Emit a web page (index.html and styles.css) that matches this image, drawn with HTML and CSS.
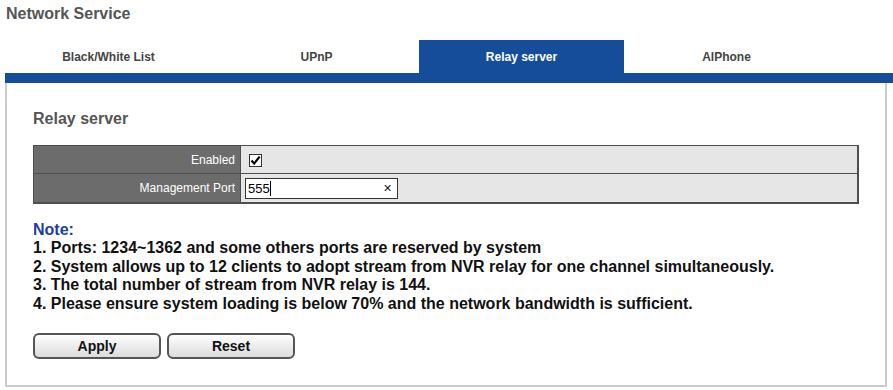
FILE: index.html
```html
<!DOCTYPE html>
<html lang="en">
<head>
    <meta charset="UTF-8">
    <title>Network Service</title>
    <link rel="stylesheet" href="styles.css">
</head>
<body>
<h1 class="page-title">Network Service</h1>
<div class="wrap">
    <div class="tabs">
        <a class="tab first" href="#">Black/White List</a>
        <a class="tab" href="#">UPnP</a>
        <a class="tab active" href="#">Relay server</a>
        <a class="tab" href="#">AlPhone</a>
    </div>
    <div class="tab-line"></div>
    <div class="panel">
        <h2>Relay server</h2>
        <table class="form-table">
            <tr class="row-1">
                <td class="label">Enabled</td>
                <td class="value">
                    <span class="check">
                        <svg width="11" height="11" viewBox="0 0 11 11"><path d="M1.5 5.5 L4.2 8.6 L9.6 1.6" fill="none" stroke="#000" stroke-width="2.2"/></svg>
                    </span>
                </td>
            </tr>
            <tr class="row-2">
                <td class="label">Management Port</td>
                <td class="value">
                    <span class="port-input">
                        <span class="val">555</span><span class="caret"></span>
                        <span class="clear">&#x2715;</span>
                    </span>
                </td>
            </tr>
        </table>
        <div class="note">
            <div class="note-title">Note:</div>
            <div>1. Ports: 1234~1362 and some others ports are reserved by system</div>
            <div>2. System allows up to 12 clients to adopt stream from NVR relay for one channel simultaneously.</div>
            <div>3. The total number of stream from NVR relay is 144.</div>
            <div>4. Please ensure system loading is below 70% and the network bandwidth is sufficient.</div>
        </div>
        <div class="buttons">
            <button>Apply</button>
            <button>Reset</button>
        </div>
    </div>
</div>
</body>
</html>
```

FILE: styles.css
```css
body {
    font-family: "Liberation Sans", Arial, sans-serif;
    margin: 0;
    padding: 0;
    background-color: #fff;
}
.page-title {
    font-size: 16px;
    line-height: 18px;
    font-weight: bold;
    color: #555;
    margin: 0;
    padding: 5px 0 0 6px;
}
.wrap {
    padding-left: 5px;
    margin-top: 17px;
}
.tabs {
    display: flex;
    padding-left: 4px;
    height: 33px;
}
.tab {
    width: 205px;
    text-align: center;
    line-height: 35px;
    font-size: 12px;
    font-weight: bold;
    color: #444;
    text-decoration: none;
}
.tab.first {
    padding-right: 6px;
    width: 199px;
}
.tab.active {
    background-color: #154d9b;
    color: #fff;
}
.tab-line {
    height: 10px;
    background-color: #154d9b;
}
.panel {
    margin-right: 6px;
    border: 2px solid #cbcbcb;
    border-top: none;
    padding: 27px 26px 26px 26px;
}
.panel h2 {
    font-size: 16px;
    line-height: 18px;
    font-weight: bold;
    color: #555;
    margin: 0 0 17px;
}
.form-table {
    width: 826px;
    border-collapse: collapse;
    font-size: 12px;
}
.form-table td {
    border: 1px solid #4e4e4e;
    padding: 0;
}
.form-table tr td:last-child {
    border-right-width: 2px;
}
.form-table .row-2 td {
    border-bottom-width: 2px;
}
.row-1 td {
    height: 27px;
}
.row-2 td {
    height: 28px;
}
.label {
    width: 201px;
    background-color: #6c6c6c;
    color: #fff;
    text-align: right;
    padding-right: 5px !important;
}
.value {
    background-color: #e6e6e6;
    padding-left: 4px !important;
}
.check {
    display: inline-flex;
    align-items: center;
    justify-content: center;
    width: 11px;
    height: 11px;
    border: 1px solid #333;
    background-color: #fff;
    margin-left: 4px;
    vertical-align: middle;
}
.port-input {
    display: flex;
    align-items: center;
    width: 151px;
    height: 19px;
    border: 1px solid #333;
    background-color: #fff;
    font-size: 13px;
    color: #000;
}
.port-input .val {
    padding-left: 2px;
}
.caret {
    width: 1px;
    height: 15px;
    background-color: #000;
}
.port-input .clear {
    margin-left: auto;
    margin-right: 5px;
    font-size: 11px;
    color: #222;
}
.note {
    margin-top: 17px;
    font-size: 16px;
    line-height: 18.4px;
    font-weight: bold;
    color: #111;
}
.note-title {
    color: #1b3f9c;
}
.buttons {
    display: flex;
    gap: 6px;
    margin-top: 20px;
}
button {
    width: 128px;
    height: 26px;
    border: 2px solid #555;
    border-radius: 6px;
    background: linear-gradient(#fefefe, #dcdcdc);
    font-family: "Liberation Sans", Arial, sans-serif;
    font-size: 14px;
    font-weight: bold;
    color: #111;
    cursor: pointer;
}
```
